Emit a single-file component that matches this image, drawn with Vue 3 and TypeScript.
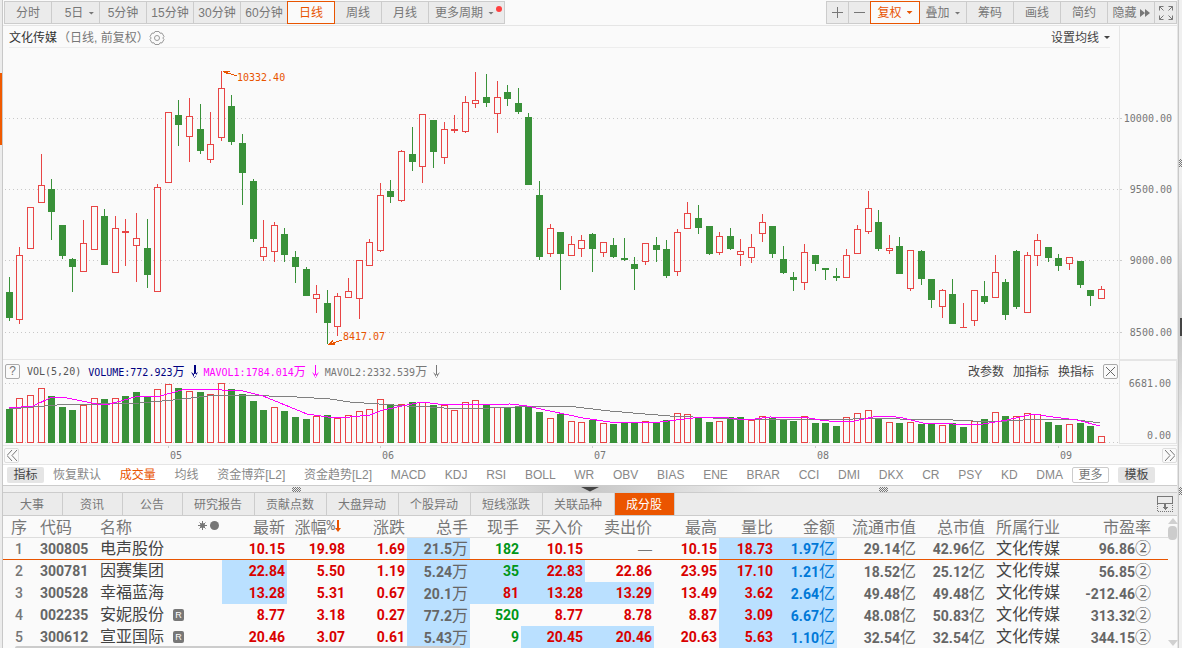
<script setup lang="ts">
import { computed, onBeforeUnmount, onMounted, ref } from 'vue'

type Candle = [kind: string, high: number, top: number, bottom: number, low: number, volume: number, volumeKind?: string]

interface Tool { label: string; caret?: boolean; dot?: boolean; active?: boolean; size?: string }
interface Cell { text: string; unit?: string; tone?: string; lit?: boolean }
interface Stock { no: number; code: string; name: string; badge?: boolean; cells: Cell[]; industry: string; pe: string }

const periods: Tool[] = [
  { label: '分时' }, { label: '5日', caret: true, size: 'lead' }, { label: '5分钟' }, { label: '15分钟' },
  { label: '30分钟' }, { label: '60分钟' }, { label: '日线', active: true }, { label: '周线' },
  { label: '月线' }, { label: '更多周期', caret: true, dot: true, size: 'wide' },
]

const tools: Tool[] = [
  { label: '复权', caret: true, active: true, size: 'mid' }, { label: '叠加', caret: true },
  { label: '筹码' }, { label: '画线' }, { label: '简约' },
]

const indicators = ['恢复默认', '成交量', '均线', '资金博弈[L2]', '资金趋势[L2]', 'MACD', 'KDJ', 'RSI', 'BOLL', 'WR',
  'OBV', 'BIAS', 'ENE', 'BRAR', 'CCI', 'DMI', 'DKX', 'CR', 'PSY', 'KD', 'DMA']

const tabs = ['大事', '资讯', '公告', '研究报告', '贡献点数', '大盘异动', '个股异动', '短线涨跌', '关联品种', '成分股']

const candles: Candle[] = [
  ['g', 277, 292, 318, 321, 409], ['r', 247, 255, 320, 324, 398], ['r', 207, 207, 249, 249, 395], ['r', 154, 185, 203, 203, 388],
  ['g', 179, 189, 212, 240, 396], ['g', 225, 225, 256, 259, 407], ['g', 258, 259, 267, 292, 410], ['r', 220, 243, 272, 272, 405],
  ['r', 206, 206, 250, 250, 398], ['g', 209, 216, 265, 265, 399], ['r', 216, 228, 273, 273, 398], ['r', 219, 231, 233, 266, 396, 'g'],
  ['r', 213, 238, 246, 282, 392, 'g'], ['g', 219, 248, 275, 288, 396], ['r', 184, 187, 292, 292, 389], ['r', 112, 112, 183, 183, 384],
  ['g', 100, 115, 125, 146, 388], ['r', 98, 116, 137, 162, 391], ['g', 104, 129, 151, 154, 392], ['r', 112, 144, 160, 163, 394],
  ['r', 71, 88, 138, 141, 383], ['g', 95, 106, 142, 145, 389], ['g', 134, 143, 173, 205, 394], ['g', 179, 181, 239, 242, 401],
  ['r', 220, 247, 257, 261, 410, 'g'], ['r', 222, 225, 252, 262, 407], ['g', 228, 234, 255, 262, 411], ['g', 251, 257, 267, 283, 417],
  ['g', 267, 269, 296, 296, 419], ['r', 285, 294, 299, 313, 416], ['g', 290, 303, 323, 344, 415], ['r', 293, 296, 327, 336, 418],
  ['r', 278, 291, 298, 298, 415], ['r', 260, 260, 299, 319, 411], ['r', 239, 242, 266, 266, 409], ['r', 183, 195, 251, 252, 399],
  ['g', 180, 191, 197, 203, 404], ['r', 150, 151, 201, 202, 404], ['g', 127, 154, 162, 171, 402], ['r', 114, 114, 167, 183, 402],
  ['g', 120, 120, 152, 168, 405], ['r', 122, 129, 158, 164, 405], ['r', 115, 129, 131, 133, 410], ['r', 96, 102, 132, 133, 402],
  ['r', 72, 100, 104, 108, 400], ['g', 74, 97, 103, 107, 404], ['r', 81, 97, 114, 133, 407], ['g', 85, 92, 99, 106, 407],
  ['g', 88, 103, 112, 114, 407], ['g', 113, 117, 185, 185, 407], ['g', 181, 195, 257, 260, 412], ['r', 224, 228, 254, 257, 418],
  ['g', 232, 232, 254, 290, 414], ['r', 236, 244, 256, 256, 421], ['r', 235, 240, 249, 257, 422], ['g', 233, 234, 249, 272, 420],
  ['r', 242, 242, 253, 257, 423], ['g', 238, 245, 257, 258, 424], ['g', 238, 258, 260, 261, 423], ['g', 257, 264, 269, 290, 422],
  ['r', 243, 243, 262, 265, 421], ['g', 237, 245, 250, 262, 423], ['g', 240, 249, 276, 278, 420], ['r', 229, 232, 272, 276, 413],
  ['r', 202, 213, 229, 229, 414], ['g', 205, 218, 228, 234, 417], ['g', 226, 226, 254, 255, 422], ['r', 232, 236, 253, 255, 421],
  ['g', 228, 236, 249, 250, 417], ['r', 239, 251, 255, 266, 417, 'g'], ['r', 234, 247, 258, 263, 420], ['r', 214, 222, 234, 242, 416],
  ['g', 226, 226, 254, 258, 418], ['g', 246, 259, 273, 274, 419], ['g', 272, 277, 280, 291, 421], ['r', 244, 252, 283, 290, 416],
  ['g', 255, 255, 264, 271, 423], ['g', 268, 268, 270, 280, 423], ['g', 268, 276, 278, 281, 426], ['r', 249, 255, 278, 278, 417],
  ['r', 225, 229, 254, 254, 413], ['r', 191, 208, 232, 234, 410], ['g', 210, 222, 249, 251, 418], ['r', 235, 248, 251, 254, 422],
  ['g', 237, 246, 274, 274, 423], ['r', 250, 250, 289, 291, 422], ['g', 250, 251, 279, 285, 424], ['g', 279, 279, 300, 308, 423],
  ['r', 289, 290, 307, 318, 425], ['g', 279, 294, 324, 324, 423], ['r', 303, 327, 328, 328, 427, 'g'], ['r', 290, 290, 321, 326, 421],
  ['g', 281, 296, 302, 304, 419], ['r', 255, 272, 298, 298, 412], ['g', 279, 282, 315, 320, 416], ['g', 250, 251, 307, 309, 416, 'r'],
  ['r', 252, 255, 313, 313, 413], ['r', 234, 240, 256, 266, 414], ['g', 247, 247, 258, 262, 422], ['g', 254, 258, 266, 271, 425],
  ['r', 257, 257, 264, 270, 424], ['g', 261, 261, 285, 288, 423], ['g', 290, 290, 296, 306, 426], ['r', 286, 289, 299, 299, 436],
]

const shortAverage: [number, number][] = [
  [9, 408], [33, 406], [52, 397], [67, 398], [97, 404], [110, 404], [135, 397], [160, 396], [182, 390], [200, 389], [243, 391],
  [263, 396], [307, 414], [328, 417], [350, 417], [370, 415], [383, 410], [407, 405], [422, 402], [438, 404], [453, 405],
  [510, 404], [527, 406], [550, 411], [583, 418], [610, 422], [660, 422], [693, 418], [720, 417], [747, 420], [770, 417],
  [809, 418], [820, 420], [838, 422], [855, 421], [873, 417], [888, 416], [903, 418], [923, 423], [953, 424], [977, 425],
  [1007, 420], [1033, 414], [1053, 417], [1077, 420], [1100, 426],
]
const longAverage: [number, number][] = [
  [9, 409], [57, 405], [140, 403], [173, 400], [217, 395], [240, 395], [297, 397], [330, 399], [350, 402], [407, 406],
  [430, 407], [457, 409], [490, 408], [540, 406], [567, 406], [610, 411], [633, 413], [670, 416], [693, 417], [733, 419],
  [853, 419], [877, 418], [900, 419], [933, 419], [973, 421], [1007, 421], [1040, 419], [1070, 419], [1100, 423],
]

const priceLevels = [
  { y: 70, label: '10000.00' }, { y: 141, label: '9500.00' }, { y: 212, label: '9000.00' }, { y: 284, label: '8500.00' },
]
const months = [
  { index: 15, label: '05' }, { index: 35, label: '06' }, { index: 55, label: '07' }, { index: 76, label: '08' }, { index: 99, label: '09' },
]

const plot = ref<HTMLElement | null>(null)
const plotWidth = ref(1115)
let observer: ResizeObserver | undefined
onMounted(() => {
  if (!plot.value) return
  plotWidth.value = plot.value.clientWidth
  observer = new ResizeObserver(() => { if (plot.value) plotWidth.value = plot.value.clientWidth })
  observer.observe(plot.value)
})
onBeforeUnmount(() => observer?.disconnect())

const step = computed(() => (plotWidth.value - 22.9) / 103)
const centre = (index: number) => Math.floor(5.285 + step.value * index)
const bars = computed(() => candles.map(([kind, high, top, bottom, low, volume, volumeKind], index) => ({
  x: centre(index), kind, high: high - 48, top: top - 48, body: bottom - top, wick: low - high,
  volumeTop: volume - 360, volumeBody: 443 - volume, volumeKind: volumeKind ?? kind,
})))
const trace = (points: [number, number][]) =>
  points.map(([x, y]) => `${Math.round((x - 4) * step.value / 10.6)},${y - 360}`).join(' ')

const stocks: Stock[] = [
  { no: 1, code: '300805', name: '电声股份', industry: '文化传媒', pe: '96.86', cells: [
    { text: '10.15' }, { text: '19.98' }, { text: '1.69' }, { text: '21.5', unit: '万', tone: 'grey', lit: true }, { text: '182', tone: 'green' },
    { text: '10.15' }, { text: '—', tone: 'dash' }, { text: '10.15' }, { text: '18.73', lit: true }, { text: '1.97', unit: '亿', tone: 'blue', lit: true },
    { text: '29.14', unit: '亿', tone: 'grey' }, { text: '42.96', unit: '亿', tone: 'grey' }] },
  { no: 2, code: '300781', name: '因赛集团', industry: '文化传媒', pe: '56.85', cells: [
    { text: '22.84', lit: true }, { text: '5.50' }, { text: '1.19' }, { text: '5.24', unit: '万', tone: 'grey', lit: true }, { text: '35', tone: 'green', lit: true },
    { text: '22.83', lit: true }, { text: '22.86' }, { text: '23.95' }, { text: '17.10', lit: true }, { text: '1.21', unit: '亿', tone: 'blue', lit: true },
    { text: '18.52', unit: '亿', tone: 'grey' }, { text: '25.12', unit: '亿', tone: 'grey' }] },
  { no: 3, code: '300528', name: '幸福蓝海', industry: '文化传媒', pe: '-212.46', cells: [
    { text: '13.28', lit: true }, { text: '5.31' }, { text: '0.67' }, { text: '20.1', unit: '万', tone: 'grey', lit: true }, { text: '81', lit: true },
    { text: '13.28', lit: true }, { text: '13.29', lit: true }, { text: '13.49' }, { text: '3.62', lit: true }, { text: '2.64', unit: '亿', tone: 'blue', lit: true },
    { text: '49.48', unit: '亿', tone: 'grey' }, { text: '49.48', unit: '亿', tone: 'grey' }] },
  { no: 4, code: '002235', name: '安妮股份', badge: true, industry: '文化传媒', pe: '313.32', cells: [
    { text: '8.77' }, { text: '3.18' }, { text: '0.27' }, { text: '77.2', unit: '万', tone: 'grey', lit: true }, { text: '520', tone: 'green' },
    { text: '8.77' }, { text: '8.78' }, { text: '8.87' }, { text: '3.09', lit: true }, { text: '6.67', unit: '亿', tone: 'blue', lit: true },
    { text: '48.08', unit: '亿', tone: 'grey' }, { text: '50.83', unit: '亿', tone: 'grey' }] },
  { no: 5, code: '300612', name: '宣亚国际', badge: true, industry: '文化传媒', pe: '344.15', cells: [
    { text: '20.46' }, { text: '3.07' }, { text: '0.61' }, { text: '5.43', unit: '万', tone: 'grey', lit: true }, { text: '9', tone: 'green' },
    { text: '20.45', lit: true }, { text: '20.46', lit: true }, { text: '20.63' }, { text: '5.63', lit: true }, { text: '1.10', unit: '亿', tone: 'blue', lit: true },
    { text: '32.54', unit: '亿', tone: 'grey' }, { text: '32.54', unit: '亿', tone: 'grey' }] },
]
</script>

<template>
  <div class="page">
    <aside class="left-rail"><i></i></aside>
    <main class="main">
      <header class="toolbar">
        <div class="group">
          <button v-for="p in periods" :key="p.label" type="button" class="tool" :class="[p.size, { active: p.active }]">
            {{ p.label }}<span v-if="p.caret" class="caret"></span><span v-if="p.dot" class="dot"></span>
          </button>
        </div>
        <div class="group">
          <button type="button" class="tool small" aria-label="放大">
            <svg width="12" height="12" viewBox="0 0 12 12" shape-rendering="crispEdges"><path d="M0 5h11v1H0zM5 0h1v11H5z" fill="#777" /></svg>
          </button>
          <button type="button" class="tool small" aria-label="缩小">
            <svg width="12" height="12" viewBox="0 0 12 12" shape-rendering="crispEdges"><path d="M0 5h11v1H0z" fill="#777" /></svg>
          </button>
          <button v-for="t in tools" :key="t.label" type="button" class="tool" :class="[t.size, { active: t.active }]">
            {{ t.label }}<span v-if="t.caret" class="caret"></span>
          </button>
          <button type="button" class="tool">
            隐藏<svg class="forward" width="10" height="8" viewBox="0 0 10 8"><path d="M0 0l5 4-5 4zM5 0l5 4-5 4z" fill="#777" /></svg>
          </button>
          <button type="button" class="tool small" aria-label="全屏">
            <svg width="14" height="14" viewBox="0 0 14 14" fill="none" stroke="#777">
              <path d="M.5 4.500v-4h4M.5.5l4 4M9.500.5h4v4M13.500.5l-4 4M.5 9.500v4h4M.5 13.500l4-4M13.500 9.500v4h-4M13.500 13.500l-4-4" />
            </svg>
          </button>
        </div>
      </header>

      <section class="panel price">
        <div ref="plot" class="plot">
          <div class="title-row">
            <span class="symbol">文化传媒</span><span class="mode">（日线, 前复权）</span>
            <button type="button" class="plain" aria-label="设置">
              <svg width="16" height="16" viewBox="0 0 16 16" fill="none" stroke="#999">
                <path d="M6 1.500h4l1 1.700 2-.1 2 3.400-1.200 1.500 1.200 1.500-2 3.400-2-.1-1 1.700H6l-1-1.700-2 .1-2-3.400L2.200 8 1 6.500l2-3.400 2 .1z" />
                <circle cx="8" cy="8" r="2.500" />
              </svg>
            </button>
            <button type="button" class="plain average">设置均线<span class="caret"></span></button>
          </div>
          <svg class="candles" :width="plotWidth" height="311" shape-rendering="crispEdges">
            <path v-for="l in priceLevels" :key="l.y" :d="`M1 ${l.y}.5H${plotWidth}`" stroke="#c8c8c8" stroke-dasharray="1 3" />
            <g v-for="b in bars" :key="b.x" :class="b.kind">
              <rect :x="b.x" :y="b.high" width="1" :height="b.wick" />
              <rect :x="b.x - 3" :y="b.top" width="7" :height="b.body" />
              <rect v-if="b.kind === 'r' && b.body > 2" class="hollow" :x="b.x - 2" :y="b.top + 1" width="5" :height="b.body - 2" />
            </g>
            <g class="mark">
              <path :d="`M${centre(20) + 2} 23h7v1h-2v1h3v1h3v1h3v1h-3v-1h-3v-1h-3l-4-1z`" />
              <text :x="centre(20) + 16" y="33">10332.40</text>
              <path :d="`M${centre(30) + 1} 297v-1l5-4v1l-1 2h3v2z`" />
              <path :d="`M${centre(30) + 6} 295v-1h3v-1h3v-1h3v1h-3v1h-3v1z`" />
              <text :x="centre(30) + 16" y="292">8417.07</text>
            </g>
          </svg>
        </div>
        <div class="axis">
          <svg width="58" height="333">
            <g v-for="l in priceLevels" :key="l.y">
              <path :d="`M0 ${l.y + 22}.5h2`" stroke="#ccc" />
              <text x="52" :y="l.y + 26" text-anchor="end">{{ l.label }}</text>
            </g>
          </svg>
        </div>
      </section>

      <section class="panel volume">
        <div class="plot">
          <div class="volume-head">
            <button type="button" class="box" aria-label="帮助">?</button>
            <span class="formula">VOL(5,20)</span>
            <span class="reading navy">VOLUME:772.923<b>万</b></span>
            <svg class="down navy" width="7" height="13" viewBox="0 0 7 13"><path d="M3 0h2v12H3zM0 7l3.500 6L7 7l-3 2H3z" /></svg>
            <span class="reading pink">MAVOL1:1784.014<b>万</b></span>
            <svg class="down pink" width="7" height="13" viewBox="0 0 7 13"><path d="M3 0h1v12H3zM0 7l3.500 6L7 7l-3.500 3z" /></svg>
            <span class="reading">MAVOL2:2332.539<b>万</b></span>
            <svg class="down" width="7" height="13" viewBox="0 0 7 13"><path d="M3 0h1v12H3zM0 7l3.500 6L7 7l-3.500 3z" /></svg>
            <div class="volume-actions">
              <button type="button" class="plain">改参数</button>
              <button type="button" class="plain">加指标</button>
              <button type="button" class="plain">换指标</button>
              <button type="button" class="box" aria-label="关闭">
                <svg width="9" height="9" viewBox="0 0 9 9"><path d="M0 0l9 9M9 0L0 9" stroke="#666" /></svg>
              </button>
            </div>
          </div>
          <svg class="volume-bars" :width="plotWidth" height="85" shape-rendering="crispEdges">
            <path :d="`M1 23.500H${plotWidth}M1 82.500H${plotWidth}`" stroke="#c8c8c8" stroke-dasharray="1 3" />
            <g v-for="b in bars" :key="b.x" :class="b.volumeKind">
              <rect :x="b.x - 3" :y="b.volumeTop" width="7" :height="b.volumeBody" />
              <rect v-if="b.volumeKind === 'r'" class="hollow" :x="b.x - 2" :y="b.volumeTop + 1" width="5" :height="b.volumeBody - 2" />
            </g>
            <polyline :points="trace(longAverage)" stroke="#808080" fill="none" />
            <polyline :points="trace(shortAverage)" stroke="#f0f" fill="none" />
          </svg>
        </div>
        <div class="axis boxed"><span>6681.00</span><span>0.00</span></div>
      </section>

      <div class="timeline">
        <button type="button" class="jump" aria-label="向前">
          <svg width="10" height="11" viewBox="0 0 10 11" fill="none" stroke="#777"><path d="M5 0L0 5.500 5 11M10 0L5 5.500 10 11" /></svg>
        </button>
        <svg class="months" :width="plotWidth" height="18">
          <g v-for="m in months" :key="m.label">
            <rect :x="centre(m.index)" y="0" width="1" height="2" fill="#ccc" />
            <text :x="centre(m.index) + 2" y="13">{{ m.label }}</text>
          </g>
        </svg>
        <button type="button" class="jump" aria-label="向后">
          <svg width="10" height="11" viewBox="0 0 10 11" fill="none" stroke="#777"><path d="M0 0l5 5.500L0 11M5 0l5 5.500L5 11" /></svg>
        </button>
      </div>

      <nav class="indicators">
        <button type="button" class="chip">指标</button>
        <div class="names">
          <button v-for="n in indicators" :key="n" type="button" class="plain" :class="{ chosen: n === '成交量' }">{{ n }}</button>
        </div>
        <button type="button" class="more">更多</button>
        <button type="button" class="chip">模板</button>
      </nav>

      <div class="splitter"><span class="grip"></span><i></i><span class="grip"></span></div>

      <nav class="tabs">
        <button v-for="t in tabs" :key="t" type="button" :class="{ active: t === '成分股' }">{{ t }}</button>
        <button type="button" class="dock" aria-label="收起">
          <svg width="16" height="16" viewBox="0 0 16 16" shape-rendering="crispEdges">
            <path d="M.5.5h15v7H.5z" fill="none" stroke="#777" />
            <path d="M.5 8v7.500h15V8" fill="none" stroke="#777" stroke-dasharray="1 1" />
            <path d="M7 8h2v3h2l-3 3-3-3h2z" fill="#777" />
          </svg>
        </button>
      </nav>

      <section class="list">
        <table>
          <colgroup>
            <col class="w-no"><col class="w-code"><col class="w-name"><col class="w-tag"><col class="w-65"><col class="w-60"><col class="w-60">
            <col class="w-63"><col class="w-51"><col class="w-64"><col class="w-69"><col class="w-65"><col class="w-56"><col class="w-62">
            <col class="w-81"><col class="w-69"><col class="w-77"><col class="w-89"><col>
          </colgroup>
          <thead>
            <tr>
              <th class="mid">序</th><th class="left">代码</th><th class="left">名称</th>
              <th class="tag">
                <svg width="22" height="10" viewBox="0 0 22 10">
                  <path d="M4.500 0v9M0 4.500h9M1.500 1.500l6 6M7.500 1.500l-6 6" stroke="#777" /><circle cx="4.500" cy="4.500" r="2.500" fill="#777" />
                  <circle cx="16.500" cy="4.500" r="4.500" fill="#777" />
                </svg>
              </th>
              <th>最新</th>
              <th>
                <div class="sorted">涨幅<small>%</small><svg width="6" height="12" viewBox="0 0 6 12"><path d="M2 0h2v8h2l-3 4-3-4h2z" fill="#e85400" /></svg></div>
              </th>
              <th>涨跌</th><th>总手</th><th>现手</th><th>买入价</th><th>卖出价</th><th>最高</th><th>量比</th><th>金额</th>
              <th>流通市值</th><th>总市值</th><th class="industry">所属行业</th><th>市盈率</th><th></th>
            </tr>
          </thead>
          <tbody>
            <tr v-for="s in stocks" :key="s.code">
              <td class="mid no">{{ s.no }}</td><td class="left grey">{{ s.code }}</td><td class="left name">{{ s.name }}</td>
              <td class="left flag"><span v-if="s.badge" class="badge">R</span></td>
              <td v-for="(c, i) in s.cells" :key="i" :class="[c.tone ?? 'red', { lit: c.lit }]">{{ c.text }}<span v-if="c.unit" class="unit">{{ c.unit }}</span></td>
              <td class="industry name">{{ s.industry }}</td><td class="grey">{{ s.pe }}<span class="unit">②</span></td><td></td>
            </tr>
          </tbody>
        </table>
        <div class="scroll">
          <svg width="10" height="7" viewBox="0 0 10 7"><path d="M0 6l5-6 5 6z" fill="#d0d0d0" /></svg>
          <i></i>
          <svg width="10" height="7" viewBox="0 0 10 7"><path d="M0 0l5 6 5-6z" fill="#d0d0d0" /></svg>
        </div>
        <div class="hscroll"></div>
      </section>
    </main>
    <aside class="right-rail"><span class="grip"></span><i></i><span class="grip"></span></aside>
  </div>
</template>

<style>
body { margin: 0; background: #fafafa; }
</style>

<style scoped>
.page { display: flex; min-height: 100vh; font: 12px/16px "Liberation Sans", "Noto Sans CJK SC", sans-serif; color: #777; background: #fafafa; overflow: hidden; }
.page * { box-sizing: border-box; }
button { margin: 0; padding: 0; border: 0; background: none; font: inherit; color: inherit; white-space: nowrap; cursor: pointer; }
svg { display: block; flex: none; }
.left-rail { flex: none; width: 3px; background: #ececec; border-right: 1px solid #c8c8c8; }
.left-rail i { display: block; width: 2px; height: 72px; margin-top: 73px; background: #f05a00; }
.main { flex: 1; min-width: 0; border-right: 1px solid #e5e5e5; }
.right-rail { flex: none; display: flex; flex-direction: column; width: 4px; padding-top: 159px; background: linear-gradient(#f0f0f0 180px, #ccc 300px, #ccc 345px, #f0f0f0 460px); border-left: 1px solid #c8c8c8; }
.right-rail .grip { width: 3px; height: 8px; }
.right-rail i { width: 2px; height: 18px; margin: 151px 0 151px 1px; background: #444; }
.grip { display: block; width: 9px; height: 5px; background: repeating-conic-gradient(#777 0 25%, #eee 0 50%) 0 0 / 2px 2px; }

.toolbar { display: flex; justify-content: space-between; padding: 1px 0 1px 1px; border-bottom: 1px solid #e5e5e5; }
.group { display: flex; }
.tool { position: relative; display: flex; align-items: center; justify-content: center; width: 48px; height: 23px; padding-top: 1px; border: 1px solid #ccc; background: #ebebeb; }
.tool + .tool { margin-left: -1px; }
.tool.small { width: 23px; padding: 0; }
.tool.mid { width: 50px; }
.tool.lead { width: 49px; padding-left: 8px; }
.tool.wide { width: 77px; padding-right: 4px; }
.tool.active { z-index: 1; border-color: #e85400; background: #fafafa; color: #e85400; }
.caret { width: 6px; height: 3px; margin-left: 5px; background: currentColor; clip-path: polygon(0 0, 100% 0, 50% 100%); }
.forward { margin-left: 3px; }
.dot { position: absolute; top: 4px; right: 2px; width: 6px; height: 6px; border-radius: 50%; background: #ff4040; }

.panel { display: flex; border-bottom: 1px solid #e5e5e5; padding-left: 1px; }
.plot { position: relative; flex: 1; min-width: 0; overflow: hidden; }
.axis { flex: none; width: 58px; border-left: 1px solid #e5e5e5; font: 10px/12px "DejaVu Sans Mono", monospace; }
.title-row { display: flex; align-items: center; height: 22px; margin: 0 9px 0 5px; padding-top: 2px; border-bottom: 1px solid #ededed; }
.symbol { color: #333; }
.mode { margin-left: 1px; }
.average { display: flex; align-items: center; margin-left: auto; color: #444; }
.candles { height: 311px; }
.r { fill: #e84545; }
.g { fill: #399139; }
.hollow { fill: #fafafa; }
svg text { font: 10px "DejaVu Sans Mono", monospace; fill: #777; }
.mark, svg .mark text { fill: #e85400; }

.volume-head { position: absolute; z-index: 1; top: 4px; left: 1px; right: 1px; display: flex; align-items: center; height: 15px; }
.box { display: flex; align-items: center; justify-content: center; width: 15px; height: 15px; border: 1px solid #aaa; border-radius: 2px; line-height: 13px; }
.formula, .reading { font: 10px/15px "DejaVu Sans Mono", monospace; white-space: pre; }
.formula { margin: 0 7px; color: #555; }
.reading b { font: 12px/15px "Noto Sans CJK SC", sans-serif; }
.down { margin: 0 6px; fill: #777; }
.reading.navy { color: #000080; }
.down.navy { fill: #000080; }
.reading.pink { color: #f0f; }
.down.pink { fill: #f0f; }
.volume-actions { display: flex; align-items: center; gap: 9px; margin-left: auto; color: #444; }
.boxed { display: flex; flex-direction: column; justify-content: space-between; align-items: flex-end; height: 84px; padding: 17px 5px 1px 0; border: 1px solid #e5e5e5; }

.timeline { display: flex; align-items: center; justify-content: space-between; height: 19px; padding: 0 0 0 1px; border-bottom: 1px solid #e5e5e5; position: relative; }
.months { position: absolute; left: 1px; top: 0; pointer-events: none; }
.jump { display: flex; align-items: center; justify-content: center; width: 15px; height: 15px; border: 1px solid #ddd; border-radius: 2px; }

.indicators { display: flex; align-items: center; gap: 9px; height: 20px; padding: 0 22px 0 4px; background: #fff; color: #888; overflow: hidden; }
.names { flex: 1; display: flex; justify-content: space-between; }
.chip, .more { flex: none; width: 37px; height: 16px; border-radius: 2px; }
.chip { background: #e5e5e5; color: #444; }
.more { border: 1px solid #ccc; line-height: 14px; color: #777; }
.chosen { color: #e85400; }

.splitter { display: flex; align-items: center; justify-content: space-between; height: 8px; padding: 0 24.600%; border: solid #ccc; border-width: 1px 0; background: linear-gradient(90deg, #f0f0f0 35%, #c8c8c8 50%, #f0f0f0 65%); }
.splitter i { width: 20px; height: 5px; background: #444; clip-path: polygon(0 0, 100% 0, 50% 100%); }

.tabs { display: flex; height: 23px; border-bottom: 1px solid #ccc; background: #ebebeb; }
.tabs button { min-width: 60px; padding: 1px 12px 0 11px; border-right: 1px solid #ccc; }
.tabs .active { background: #eb5500; color: #fff; }
.tabs .dock { display: flex; align-items: center; justify-content: center; min-width: 24px; margin-left: auto; padding: 0; border: 0; }

.list { position: relative; }
table { width: 100%; table-layout: fixed; border-collapse: separate; border-spacing: 0; }
th, td { height: 22px; padding: 0 2px 0 0; text-align: right; vertical-align: middle; white-space: nowrap; }
th { border-bottom: 1px solid #ddd; font: 400 16px/18px "Noto Sans CJK SC", sans-serif; }
.list thead th { padding-bottom: 2px; }
td { font: 700 14px/18px Roboto, "Noto Sans CJK SC", sans-serif; }
tbody tr:first-child td { border-bottom: 1px solid #e85400; }
.w-no { width: 32px; } .w-code { width: 60px; } .w-name { width: 77px; } .w-tag { width: 50px; }
.w-51 { width: 51px; } .w-56 { width: 56px; } .w-60 { width: 60px; } .w-62 { width: 62px; } .w-63 { width: 63px; } .w-64 { width: 64px; }
.w-65 { width: 65px; } .w-69 { width: 69px; } .w-77 { width: 77px; } .w-81 { width: 81px; } .w-89 { width: 89px; }
.mid { padding: 0; text-align: center; }
.left { padding: 0 0 0 5px; text-align: left; }
.tag svg { margin-left: 26px; }
.sorted { display: flex; align-items: center; justify-content: flex-end; padding-right: 4px; }
.sorted small { font: 14px/18px "Liberation Mono", monospace; }
td.no { font-weight: 500; }
td.name { font-size: 16px; font-weight: 400; color: #444; }
.industry { padding: 0 0 0 9px; text-align: left; }
td.flag { padding-left: 1px; }
.badge { display: block; width: 11px; height: 12px; border-radius: 2px; background: #777; color: #fff; font: 9px/12px "Liberation Sans", sans-serif; text-align: center; }
.unit { font: 400 16px/16px "Noto Sans CJK SC", sans-serif; }
.red { color: #d90000; } .green { color: #009618; } .blue { color: #0078d7; } .grey { color: #666; }
td.dash { color: #777; font: 400 14px/18px "Liberation Sans", sans-serif; }
.lit { background: #bae0ff; }
.scroll { position: absolute; top: 2px; right: 0; bottom: 1px; display: flex; flex-direction: column; align-items: center; width: 9px; background: #fafafa; }
.scroll i { width: 9px; height: 14px; margin: 1px 0 auto; border-radius: 4px; background: #ccc; }
.hscroll { position: absolute; left: 12px; bottom: 0; width: 38%; height: 2px; border-radius: 2px 2px 0 0; background: #ccc; }
</style>
